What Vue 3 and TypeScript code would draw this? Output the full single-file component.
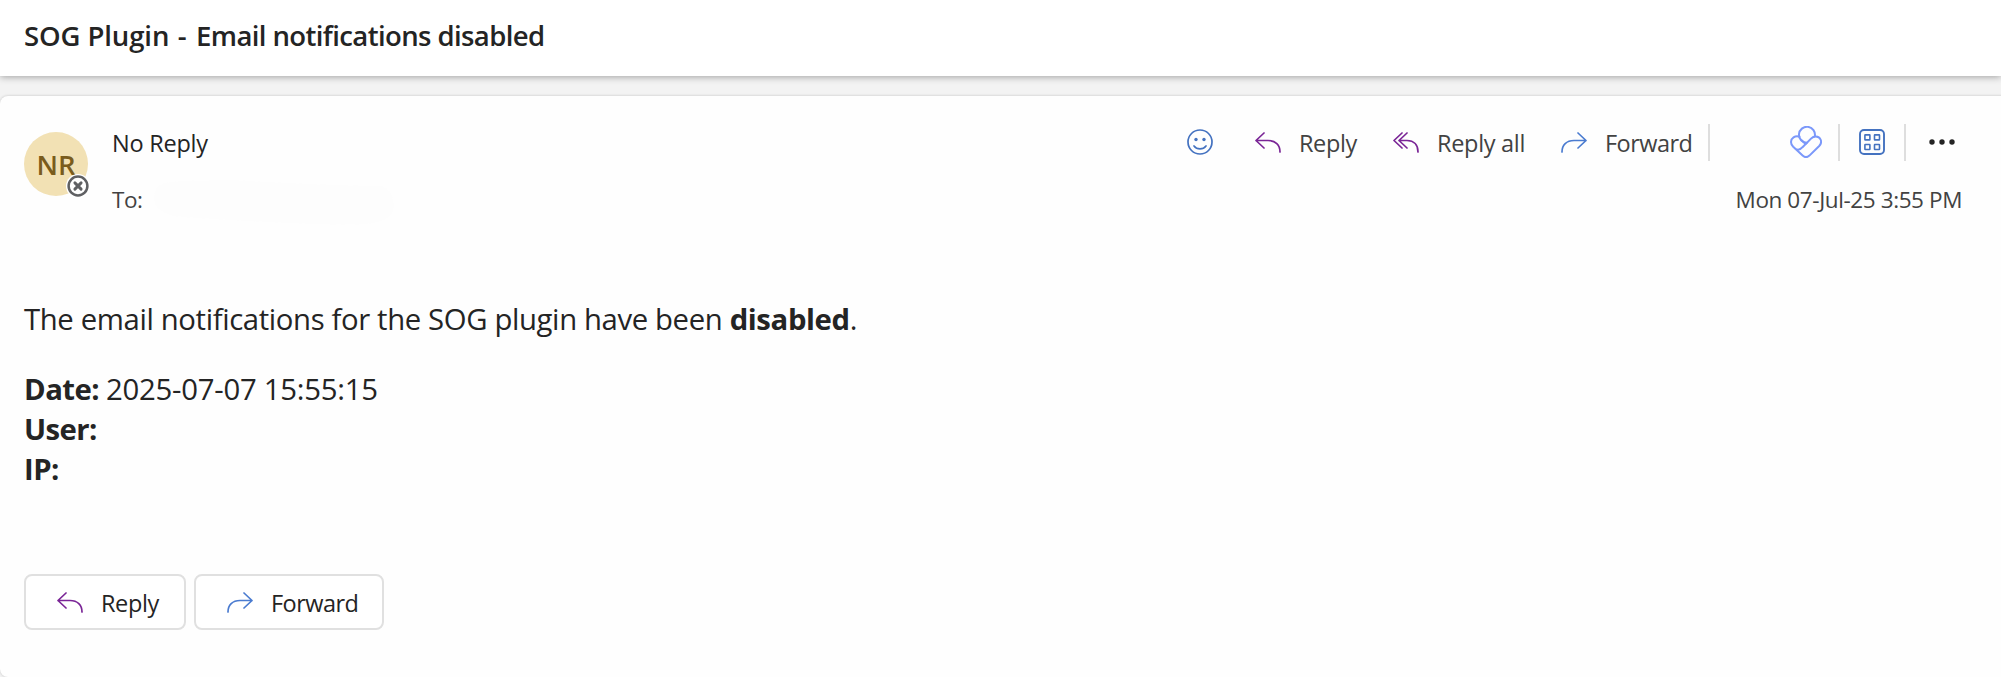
<script setup lang="ts">
interface Action {
  id: string
  label: string
  kind: 'reply' | 'replyAll' | 'forward'
}

const actions: Action[] = [
  { id: 'reply', label: 'Reply', kind: 'reply' },
  { id: 'reply-all', label: 'Reply all', kind: 'replyAll' },
  { id: 'forward', label: 'Forward', kind: 'forward' },
]

const footerActions = actions.filter((a) => a.kind !== 'replyAll')

const arrows: Record<Action['kind'], string> = {
  reply: 'M9 1 L1 8.5 L9 16 M1 8.5 H13 C20.5 8.5 25 13 25 20',
  replyAll: 'M9 1 L1 8.5 L9 16 M14 1 L6 8.5 L14 16 M6 8.5 H14 C21 8.5 25 13 25 20',
  forward: 'M17 1 L25 8.5 L17 16 M25 8.5 H13 C5.5 8.5 1 13 1 20',
}
</script>

<template>
  <div class="page">
    <header class="subject">
      <h1><span class="product">SOG Plugin</span><span class="dash"> - </span><span class="topic">Email notifications disabled</span></h1>
    </header>

    <main class="card">
      <section class="message-head">
        <div class="avatar">
          <span>NR</span>
          <svg class="presence" viewBox="0 0 24 24">
            <circle cx="12" cy="12" r="12" fill="#fff" />
            <circle cx="12" cy="12" r="9.4" fill="#fff" stroke="#5f6063" stroke-width="2.5" />
            <path d="M8.9 8.9 L15.1 15.1 M15.1 8.9 L8.9 15.1" stroke="#5f6063" stroke-width="2.9" stroke-linecap="round" />
          </svg>
        </div>
        <div class="people">
          <div class="sender">No Reply</div>
          <div class="recipient">
            <span>To:</span>
            <svg class="blank-name" viewBox="0 0 244 46">
              <path d="M4 12 C8 0 20 1 80 0 C120 2 190 6 230 6 C240 8 244 20 242 30 C238 44 220 46 160 44 C110 42 40 38 22 36 C8 32 0 24 4 12Z" fill="#fdfdfd" />
            </svg>
          </div>
        </div>
        <div class="tools">
          <div class="toolbar">
            <svg class="icon smile" viewBox="0 0 26 26">
              <circle cx="13" cy="13" r="12" stroke="#4472c0" stroke-width="1.7" fill="none" />
              <circle cx="9" cy="10.5" r="1.7" fill="#4472c0" />
              <circle cx="17" cy="10.5" r="1.7" fill="#4472c0" />
              <path d="M7 17 C10 20.8 16 20.8 19 17" stroke="#4472c0" stroke-width="1.7" fill="none" stroke-linecap="round" />
            </svg>
            <div v-for="a in actions" :key="a.id" class="action" :class="a.id">
              <svg class="arrow" :class="a.kind" viewBox="0 0 26 21"><path :d="arrows[a.kind]" /></svg>
              <span>{{ a.label }}</span>
            </div>
            <i class="rule first"></i>
            <svg class="knot" viewBox="0 0 32 32" fill="none" stroke="#7b98fa" stroke-width="2" stroke-linejoin="round" stroke-linecap="round">
              <path d="M17 16.8 A8 8 0 1 1 24.8 10.4" />
              <path d="M9.4 10.7 C5 9.4 1 12.2 1 16 C1 18 1.8 19.4 3.2 20.8 L12.6 29.6 C14.8 31.6 17.2 31.6 19.4 29.6 L29.2 20 C33 16 30.5 10.5 25.8 10.5 C23.8 10.5 22.4 11.2 21 12.6 L12.5 21.2 C10.5 23.6 8 24.4 5.4 22.9" />
              <path d="M11.6 14.2 L15.6 18" />
            </svg>
            <i class="rule second"></i>
            <svg class="icon apps" viewBox="0 0 26 26" fill="none" stroke="#4472c0">
              <rect x="1" y="1" width="24" height="24" rx="4" stroke-width="1.9" />
              <g stroke-width="1.6">
                <rect x="5.9" y="5.9" width="5" height="5" rx=".4" />
                <rect x="15.5" y="5.9" width="5" height="5" rx=".4" />
                <rect x="5.9" y="15.5" width="5" height="5" rx=".4" />
                <rect x="15.5" y="15.5" width="5" height="5" rx=".4" />
              </g>
            </svg>
            <i class="rule third"></i>
            <svg class="icon more" viewBox="0 0 26 26" fill="#242424">
              <circle cx="3" cy="13" r="2.7" />
              <circle cx="13" cy="13" r="2.7" />
              <circle cx="23" cy="13" r="2.7" />
            </svg>
          </div>
          <time class="sent">Mon 07-Jul-25 3:55 PM</time>
        </div>
      </section>

      <article class="body">
        <p>The email notifications for the SOG plugin have been <b>disabled</b>.</p>
        <div class="details">
          <div class="date-line"><b>Date:</b> <span>2025-07-07 15:55:15</span></div>
          <div><b>User:</b></div>
          <div><b>IP:</b></div>
        </div>
      </article>

      <footer class="footer">
        <button v-for="a in footerActions" :key="a.id" type="button" :class="a.id">
          <svg class="arrow" :class="a.kind" viewBox="0 0 26 21"><path :d="arrows[a.kind]" /></svg>
          <span>{{ a.label }}</span>
        </button>
      </footer>
    </main>
  </div>
</template>

<style>
body {
  margin: 0;
  background: #f3f3f3;
}
</style>

<style scoped>
.page {
  box-sizing: border-box;
  height: 677px;
  overflow: hidden;
  display: flex;
  flex-direction: column;
  gap: 20px;
  background: #f3f3f3;
  color: #242424;
  font-family: "Open Sans", "Noto Sans", sans-serif;
}
.subject {
  height: 76px;
  flex: none;
  padding-left: 24px;
  background: #fff;
  box-shadow: 0 1px 7px rgba(0, 0, 0, 0.34);
}
h1 {
  margin: 0;
  font-size: 27.5px;
  font-weight: 600;
  line-height: 71px;
  white-space: pre;
}
.product {
  letter-spacing: -0.1px;
}
.dash {
  letter-spacing: 1.2px;
}
.topic {
  letter-spacing: -0.6px;
}
.card {
  box-sizing: border-box;
  height: 581px;
  flex: none;
  margin-right: -10px;
  padding-left: 24px;
  background: #fefefe;
  border-radius: 8px;
  box-shadow: 0 0 3px rgba(0, 0, 0, 0.2);
}
.message-head {
  display: flex;
  height: 203px;
}
.avatar {
  position: relative;
  width: 64px;
  height: 64px;
  margin-top: 36px;
  border-radius: 50%;
  background: #f2e1b4;
  color: #7a5c1d;
  font-size: 27.5px;
  font-weight: 600;
  line-height: 65px;
  text-align: center;
}
.presence {
  position: absolute;
  left: 42px;
  top: 42px;
  width: 24px;
  height: 24px;
}
.people {
  margin: 32px 0 0 24px;
}
.sender {
  font-size: 23.5px;
  line-height: 30px;
  letter-spacing: -0.25px;
}
.recipient {
  display: flex;
  gap: 9px;
  height: 46px;
  margin-top: 26px;
  color: #424242;
  font-size: 22.5px;
  line-height: 31px;
  letter-spacing: -0.5px;
}
.blank-name {
  width: 244px;
  height: 46px;
  margin-top: -4px;
}
.tools {
  display: flex;
  flex-direction: column;
  align-items: flex-end;
  margin-left: auto;
  padding: 27px 51px 0 0;
}
.toolbar {
  display: flex;
  align-items: center;
  height: 38px;
  padding-right: 5px;
  color: #424242;
}
.icon {
  width: 26px;
  height: 26px;
}
.action,
.footer button {
  display: flex;
  align-items: center;
  gap: 18px;
  font-size: 23.5px;
  line-height: 30px;
  white-space: nowrap;
}
.action span {
  position: relative;
  top: 1px;
}
.reply {
  letter-spacing: -0.4px;
}
.reply-all {
  letter-spacing: -0.3px;
}
.forward {
  letter-spacing: -0.55px;
}
.action.reply {
  width: 104px;
  margin-left: 42px;
}
.action.reply-all {
  width: 132px;
  margin-left: 34px;
}
.action.forward {
  width: 131px;
  margin-left: 36px;
}
.arrow {
  width: 26px;
  height: 21px;
  flex: none;
  fill: none;
  stroke: #7a2596;
  stroke-width: 1.7;
  stroke-linecap: round;
  stroke-linejoin: round;
}
.arrow.forward {
  stroke: #4a7bd0;
}
.rule {
  width: 2px;
  height: 37px;
  background: #dedede;
}
.rule.first {
  margin: 0 80px 0 16px;
}
.knot {
  width: 32px;
  height: 32px;
}
.rule.second {
  margin: 0 19px 0 16px;
}
.rule.third {
  margin: 0 23px 0 19px;
}
.sent {
  margin-top: 24px;
  margin-right: -2px;
  color: #424242;
  font-size: 22.5px;
  line-height: 30px;
  letter-spacing: -0.4px;
}
.body {
  font-size: 29.3px;
  line-height: 40px;
}
.body p {
  margin: 0 0 30px;
  letter-spacing: -0.37px;
}
.details {
  letter-spacing: -0.55px;
}
.date-line span {
  letter-spacing: -0.25px;
}
.footer {
  display: flex;
  gap: 8px;
  margin-top: 85px;
}
.footer button {
  box-sizing: border-box;
  height: 56px;
  padding: 0 0 0 31px;
  border: 2px solid #e0e0e0;
  border-radius: 8px;
  background: #fff;
  color: #242424;
  font-family: inherit;
}
.footer button.reply {
  width: 162px;
}
.footer button.forward {
  width: 190px;
}
.footer span {
  position: relative;
  top: 1px;
}
</style>
